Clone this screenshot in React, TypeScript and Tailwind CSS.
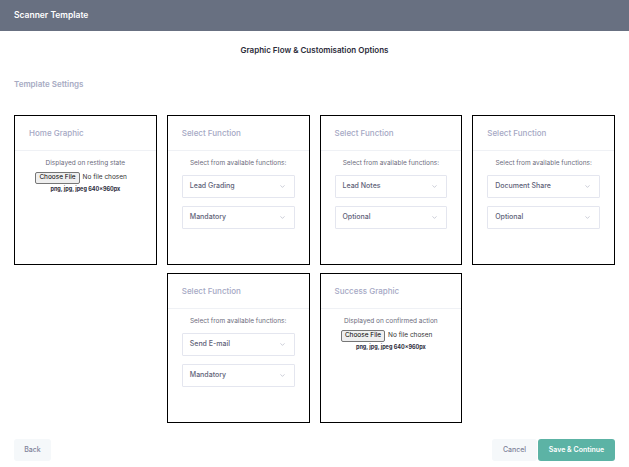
import { ChevronDown } from "lucide-react";

const font = { fontFamily: "Inter, 'Noto Sans', sans-serif" };

function CardHeader({ title }: { title: string }) {
  return (
    <div className="h-[35px] px-[14px] flex items-center border-b border-[#eff1f5]">
      <span className="text-[8px] font-medium text-[#a5a8c4]">{title}</span>
    </div>
  );
}

function FakeSelect({ value }: { value: string }) {
  return (
    <div className="h-[23px] border border-[#e4e6ef] rounded-[1px] flex items-center justify-between pl-[7px] pr-[8px]">
      <span className="text-[7px] font-medium text-[#5e6278]">{value}</span>
      <ChevronDown size={7} strokeWidth={1.5} className="text-[#8a8ea5]" />
    </div>
  );
}

function FunctionCard({ first, second }: { first: string; second: string }) {
  return (
    <div className="h-[150px] border border-black bg-white">
      <CardHeader title="Select Function" />
      <div className="px-[14px] pt-[8px]">
        <p className="text-center text-[6.5px] text-[#6c6c7c] leading-[9px]">
          Select from available functions:
        </p>
        <div className="mt-[7px] flex flex-col gap-[8px]">
          <FakeSelect value={first} />
          <FakeSelect value={second} />
        </div>
      </div>
    </div>
  );
}

function GraphicCard({ title, caption }: { title: string; caption: string }) {
  return (
    <div className="h-[150px] border border-black bg-white">
      <CardHeader title={title} />
      <div className="pt-[8px] flex flex-col items-center">
        <p className="text-center text-[6.5px] text-[#6c6c7c] leading-[9px]">{caption}</p>
        <div className="mt-[4px] w-[100px] flex items-center">
          <span className="h-[12px] px-[3px] flex items-center border border-[#767676] bg-[#efefef] rounded-[2px] text-[6.5px] text-black">
            Choose File
          </span>
          <span className="ml-[3px] text-[6.5px] text-[#333]">No file chosen</span>
        </div>
        <p className="mt-[1px] text-[5.5px] font-bold text-[#2b2b3a] leading-[8px]">
          png, jpg, jpeg 640×960px
        </p>
      </div>
    </div>
  );
}

export default function App() {
  return (
    <div className="w-[629px] h-[467px] bg-white flex flex-col" style={font}>
      <div className="h-[31px] bg-[#687081] flex items-center px-[14px]">
        <span className="text-[8.5px] font-semibold text-white">Scanner Template</span>
      </div>

      <div className="px-[14px] flex flex-col flex-1">
        <h1 className="pt-[14px] text-center text-[8px] font-semibold text-[#2b2b3a] leading-[10px]">
          Graphic Flow &amp; Customisation Options
        </h1>
        <h2 className="mt-[24px] text-[8px] font-semibold text-[#a7abc3] leading-[10px]">
          Template Settings
        </h2>

        <div className="mt-[26px] grid grid-cols-4 gap-x-[10px] gap-y-[8px]">
          <GraphicCard title="Home Graphic" caption="Displayed on resting state" />
          <FunctionCard first="Lead Grading" second="Mandatory" />
          <FunctionCard first="Lead Notes" second="Optional" />
          <FunctionCard first="Document Share" second="Optional" />
          <div className="col-start-2">
            <FunctionCard first="Send E-mail" second="Mandatory" />
          </div>
          <GraphicCard title="Success Graphic" caption="Displayed on confirmed action" />
        </div>

        <div className="mt-[16px] flex items-center justify-between">
          <button className="h-[22px] w-[37px] rounded-[3px] bg-[#f5f8fa] text-[7px] font-medium text-[#7e8299]">
            Back
          </button>
          <div className="flex items-center gap-[1px]">
            <button className="h-[22px] w-[45px] rounded-[3px] bg-[#f5f8fa] text-[7px] font-medium text-[#7e8299]">
              Cancel
            </button>
            <button className="h-[22px] w-[77px] rounded-[3px] bg-[#5cb3a5] text-[7px] font-semibold text-white">
              Save &amp; Continue
            </button>
          </div>
        </div>
      </div>
    </div>
  );
}
